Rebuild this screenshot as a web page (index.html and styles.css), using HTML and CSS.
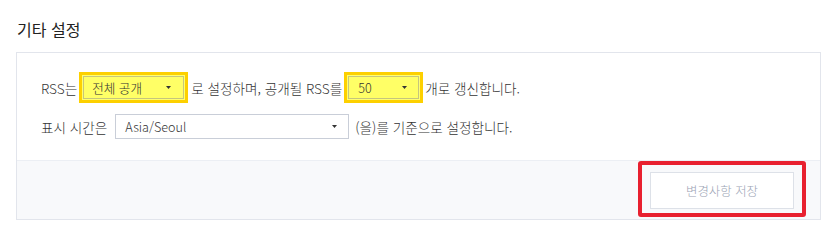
FILE: index.html
```html
<!DOCTYPE html>
<html lang="ko">
<head>
<meta charset="utf-8">
<title>기타 설정</title>
<link rel="stylesheet" href="styles.css">
</head>
<body>
<div class="page">
  <h2 class="title">기타 설정</h2>
  <div class="panel">
    <div class="panel-body">
      <div class="row row-first">
        <span class="txt">RSS는</span>
        <span class="hl hl-a"><span class="sel sel-hl sel-a"><span class="sel-val">전체 공개</span><svg class="caret" width="5" height="3" viewBox="0 0 5 3"><path d="M0 0H5L2.5 3Z"/></svg></span></span>
        <span class="txt">로 설정하며, 공개될 RSS를</span>
        <span class="hl hl-b"><span class="sel sel-hl sel-b"><span class="sel-val">50</span><svg class="caret" width="5" height="3" viewBox="0 0 5 3"><path d="M0 0H5L2.5 3Z"/></svg></span></span>
        <span class="txt">개로 갱신합니다.</span>
      </div>
      <div class="row row-second">
        <span class="txt">표시 시간은</span>
        <span class="sel sel-tz"><span class="sel-val">Asia/Seoul</span><svg class="caret" width="5" height="3" viewBox="0 0 5 3"><path d="M0 0H5L2.5 3Z"/></svg></span>
        <span class="txt">(을)를 기준으로 설정합니다.</span>
      </div>
    </div>
    <div class="panel-foot">
      <button class="btn-save" type="button">변경사항 저장</button>
      <div class="mark"></div>
    </div>
  </div>
</div>
</body>
</html>
```

FILE: styles.css
```css
* { box-sizing: border-box; }
html, body { margin: 0; padding: 0; background: #fff; }
body {
  font-family: "Noto Sans CJK KR", "Noto Sans", sans-serif;
  color: #333;
  font-size: 13px;
}
.page { padding: 17px 0 0 16px; }
.title {
  margin: 0 0 11px 1px;
  font-size: 16px;
  font-weight: 400;
  line-height: 24px;
  color: #222;
}
.panel {
  width: 805px;
  border: 1px solid #e2e5ec;
  background: #fff;
}
.panel-body { padding: 19px 24px 21px; }
.row {
  display: flex;
  align-items: center;
  line-height: 18px;
  font-size: 13.6px;
  font-weight: 300;
}
.row-first { height: 31px; }
.row-second { margin-top: 11px; height: 25px; }
.txt { white-space: nowrap; }
.hl {
  display: inline-flex;
  border: 3px solid #fdd000;
  padding: 1px;
  background: #ffff70;
}
.hl-a { margin: 0 3px 0 2px; }
.hl-b { margin: 0 2px 0 2px; }
.sel {
  display: inline-flex;
  align-items: center;
  justify-content: space-between;
  border: 1px solid #c9ced8;
  background: #fff;
  color: #333;
  font-size: 12.6px;
  font-weight: 300;
}
.sel-hl {
  background: #ffff66;
  border-color: #c6c67c;
  height: 23px;
}
.sel-a { width: 101px; padding: 0 12px 0 8px; }
.sel-b { width: 71px; padding: 0 11px 0 9px; }
.sel-tz { width: 234px; height: 25px; padding: 0 11px 0 9px; margin: 0 6px 0 8px; }
.caret { fill: #333; display: block; }
.panel-foot {
  position: relative;
  border-top: 1px solid #eceff4;
  background: #f8f9fb;
  padding: 11px 26px 10px;
  display: flex;
  justify-content: flex-end;
}
.btn-save {
  width: 144px;
  height: 37px;
  border: 1px solid #dde1e8;
  background: #fff;
  color: #9ba3b4;
  font-family: "Noto Sans CJK KR", "Noto Sans", sans-serif;
  font-size: 12.4px;
  font-weight: 300;
  padding: 0;
}
.mark {
  position: absolute;
  left: 621px;
  top: 0;
  width: 168px;
  height: 56px;
  border: 4px solid #e8202f;
  border-radius: 3px;
}
```
